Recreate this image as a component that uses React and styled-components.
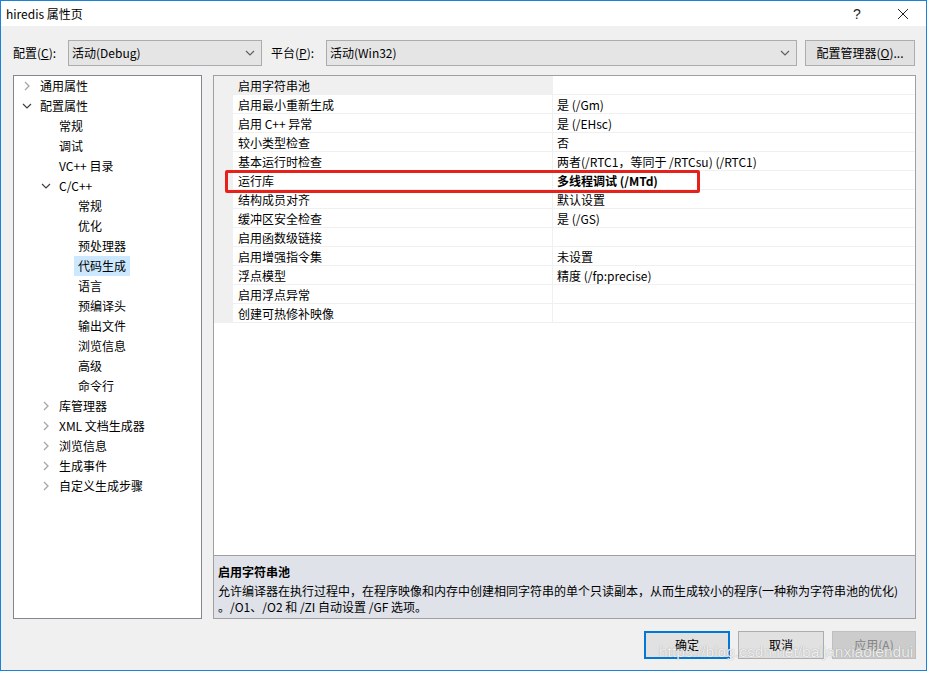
import React from 'react';
import styled, { createGlobalStyle } from 'styled-components';

const GlobalStyle = createGlobalStyle`
  html, body {
    margin: 0;
    padding: 0;
    background: #ffffff;
  }
  body {
    font-family: "Noto Sans CJK SC", "Noto Sans", sans-serif;
    font-size: 12px;
    color: #000;
  }
`;

const Window = styled.div`
  position: relative;
  width: 927px;
  height: 671px;
  box-sizing: border-box;
  border: 1px solid #1883d7;
  background: #f0f0f0;
  display: flex;
  flex-direction: column;
`;

const TitleBar = styled.div`
  height: 25px;
  background: #ffffff;
  display: flex;
  align-items: center;
  padding-left: 5px;
  font-size: 12px;
  line-height: 16px;
`;

const TitleText = styled.div`
  flex: 1;
`;

const TitleButton = styled.div`
  width: 46px;
  height: 25px;
  display: flex;
  align-items: center;
  justify-content: center;
  font-family: "Liberation Sans", sans-serif;
  font-size: 14px;
  color: #222;
`;

const Body = styled.div`
  flex: 1;
  display: flex;
  flex-direction: column;
  padding: 14px 10px 0 12px;
`;

const ConfigRow = styled.div`
  display: flex;
  align-items: center;
  height: 26px;
`;

const FieldLabel = styled.div`
  width: ${(p) => p.w}px;
  line-height: 16px;
  white-space: nowrap;
  u {
    text-decoration: underline;
  }
`;

const Select = styled.div`
  width: ${(p) => p.w}px;
  height: 26px;
  box-sizing: border-box;
  border: 1px solid #acacac;
  background: #e5e5e5;
  display: flex;
  align-items: center;
  padding: 0 6px 0 3px;
  margin-right: ${(p) => p.mr || 0}px;
  line-height: 16px;
`;

const SelectText = styled.div`
  flex: 1;
  white-space: nowrap;
`;

const PushButton = styled.div`
  width: ${(p) => p.w}px;
  height: ${(p) => p.h || 26}px;
  box-sizing: border-box;
  border: ${(p) =>
    p.primary ? '2px solid #0078d7' : p.disabled ? '1px solid #bfbfbf' : '1px solid #adadad'};
  background: ${(p) => (p.disabled ? '#cccccc' : '#e1e1e1')};
  color: ${(p) => (p.disabled ? '#838383' : '#000')};
  display: flex;
  align-items: center;
  justify-content: center;
  line-height: 16px;
  white-space: nowrap;
`;

const Main = styled.div`
  display: flex;
  gap: 11px;
  margin-top: 9px;
`;

const TreePanel = styled.div`
  width: 189px;
  height: 544px;
  box-sizing: border-box;
  border: 1px solid #828790;
  background: #ffffff;
`;

const TreeRow = styled.div`
  height: 20px;
  display: flex;
  align-items: center;
  padding-left: ${(p) => 6 + p.level * 19}px;
  line-height: 16px;
`;

const Twisty = styled.div`
  width: 14px;
  height: 14px;
  margin-right: 2px;
  display: flex;
  align-items: center;
  justify-content: center;
`;

const TreeText = styled.div`
  padding: 2px 4px;
  white-space: nowrap;
  background: ${(p) => (p.selected ? '#cce8ff' : 'transparent')};
`;

const RightColumn = styled.div`
  width: 703px;
  display: flex;
  flex-direction: column;
`;

const Grid = styled.div`
  position: relative;
  height: 481px;
  box-sizing: border-box;
  border: 1px solid #a0a0a0;
  background: #ffffff;
`;

const PropRow = styled.div`
  display: flex;
  height: 19px;
  line-height: 16px;
`;

const Gutter = styled.div`
  width: 19px;
  background: #f0f0f0;
`;

const NameCell = styled.div`
  width: 314px;
  padding: 1px 0 0 5px;
  border-bottom: 1px solid #f0f0f0;
  border-right: 1px solid #f0f0f0;
  background: ${(p) => (p.active ? '#f0f0f0' : '#ffffff')};
  display: flex;
  align-items: center;
  white-space: nowrap;
`;

const ValueCell = styled.div`
  flex: 1;
  padding: 1px 0 0 4px;
  border-bottom: 1px solid #f0f0f0;
  display: flex;
  align-items: center;
  white-space: nowrap;
  font-weight: ${(p) => (p.bold ? 700 : 400)};
`;

const RedMark = styled.div`
  position: absolute;
  left: 11px;
  top: 94px;
  width: 475px;
  height: 23px;
  box-sizing: border-box;
  border: 3px solid #e8201a;
  border-radius: 2px;
  pointer-events: none;
`;

const DescPanel = styled.div`
  height: 63px;
  box-sizing: border-box;
  border: 1px solid #a0a0a0;
  border-top: none;
  background: #dfe2e9;
  padding: 7px 4px 0 4px;
`;

const DescTitle = styled.div`
  font-weight: 700;
  line-height: 18px;
  margin-bottom: 2px;
`;

const DescLine = styled.div`
  line-height: 16px;
  white-space: nowrap;
`;

const Footer = styled.div`
  display: flex;
  justify-content: flex-end;
  gap: 8px;
  margin-top: 12px;
`;

const Watermark = styled.div`
  position: absolute;
  left: 658px;
  top: 642px;
  font-family: "Liberation Sans", sans-serif;
  font-size: 15.5px;
  color: rgba(255, 255, 255, 0.85);
  text-shadow: 0 0 1px rgba(90, 90, 90, 0.6);
  white-space: nowrap;
  pointer-events: none;
`;

const ChevronRight = () => (
  <svg width="8" height="10" viewBox="0 0 8 10">
    <polyline points="2,1 6,5 2,9" fill="none" stroke="#a6a6a6" strokeWidth="1.3" />
  </svg>
);

const ChevronDown = ({ color = '#404040' }) => (
  <svg width="10" height="8" viewBox="0 0 10 8">
    <polyline points="1,2 5,6 9,2" fill="none" stroke={color} strokeWidth="1.2" />
  </svg>
);

const CloseIcon = () => (
  <svg width="12" height="12" viewBox="0 0 12 12">
    <path d="M1 1 L11 11 M11 1 L1 11" stroke="#222" strokeWidth="1" />
  </svg>
);

const tree = [
  { label: '通用属性', level: 0, twisty: 'closed' },
  { label: '配置属性', level: 0, twisty: 'open' },
  { label: '常规', level: 1 },
  { label: '调试', level: 1 },
  { label: 'VC++ 目录', level: 1 },
  { label: 'C/C++', level: 1, twisty: 'open' },
  { label: '常规', level: 2 },
  { label: '优化', level: 2 },
  { label: '预处理器', level: 2 },
  { label: '代码生成', level: 2, selected: true },
  { label: '语言', level: 2 },
  { label: '预编译头', level: 2 },
  { label: '输出文件', level: 2 },
  { label: '浏览信息', level: 2 },
  { label: '高级', level: 2 },
  { label: '命令行', level: 2 },
  { label: '库管理器', level: 1, twisty: 'closed' },
  { label: 'XML 文档生成器', level: 1, twisty: 'closed' },
  { label: '浏览信息', level: 1, twisty: 'closed' },
  { label: '生成事件', level: 1, twisty: 'closed' },
  { label: '自定义生成步骤', level: 1, twisty: 'closed' },
];

const props = [
  { name: '启用字符串池', value: '', active: true },
  { name: '启用最小重新生成', value: '是 (/Gm)' },
  { name: '启用 C++ 异常', value: '是 (/EHsc)' },
  { name: '较小类型检查', value: '否' },
  { name: '基本运行时检查', value: '两者(/RTC1，等同于 /RTCsu) (/RTC1)' },
  { name: '运行库', value: '多线程调试 (/MTd)', bold: true },
  { name: '结构成员对齐', value: '默认设置' },
  { name: '缓冲区安全检查', value: '是 (/GS)' },
  { name: '启用函数级链接', value: '' },
  { name: '启用增强指令集', value: '未设置' },
  { name: '浮点模型', value: '精度 (/fp:precise)' },
  { name: '启用浮点异常', value: '' },
  { name: '创建可热修补映像', value: '' },
];

export default function App() {
  return (
    <>
      <GlobalStyle />
      <Window>
        <TitleBar>
          <TitleText>hiredis 属性页</TitleText>
          <TitleButton>?</TitleButton>
          <TitleButton>
            <CloseIcon />
          </TitleButton>
        </TitleBar>
        <Body>
          <ConfigRow>
            <FieldLabel w={55}>
              配置(<u>C</u>):
            </FieldLabel>
            <Select w={194} mr={9}>
              <SelectText>活动(Debug)</SelectText>
              <ChevronDown color="#606060" />
            </Select>
            <FieldLabel w={55}>
              平台(<u>P</u>):
            </FieldLabel>
            <Select w={471} mr={8}>
              <SelectText>活动(Win32)</SelectText>
              <ChevronDown color="#606060" />
            </Select>
            <PushButton w={110}>
              配置管理器(<u>O</u>)...
            </PushButton>
          </ConfigRow>
          <Main>
            <TreePanel>
              {tree.map((item, i) => (
                <TreeRow key={i} level={item.level}>
                  <Twisty>
                    {item.twisty === 'closed' && <ChevronRight />}
                    {item.twisty === 'open' && <ChevronDown />}
                  </Twisty>
                  <TreeText selected={item.selected}>{item.label}</TreeText>
                </TreeRow>
              ))}
            </TreePanel>
            <RightColumn>
              <Grid>
                {props.map((p, i) => (
                  <PropRow key={i}>
                    <Gutter />
                    <NameCell active={p.active}>{p.name}</NameCell>
                    <ValueCell bold={p.bold}>{p.value}</ValueCell>
                  </PropRow>
                ))}
                <RedMark />
              </Grid>
              <DescPanel>
                <DescTitle>启用字符串池</DescTitle>
                <DescLine>
                  允许编译器在执行过程中，在程序映像和内存中创建相同字符串的单个只读副本，从而生成较小的程序(一种称为字符串池的优化)
                </DescLine>
                <DescLine>。/O1、/O2 和 /ZI 自动设置 /GF 选项。</DescLine>
              </DescPanel>
            </RightColumn>
          </Main>
          <Footer>
            <PushButton w={86} h={28} primary>
              确定
            </PushButton>
            <PushButton w={86} h={28}>
              取消
            </PushButton>
            <PushButton w={84} h={28} disabled>
              应用(A)
            </PushButton>
          </Footer>
        </Body>
        <Watermark>https://blog.csdn.net/baijanxiaoiendui</Watermark>
      </Window>
    </>
  );
}
